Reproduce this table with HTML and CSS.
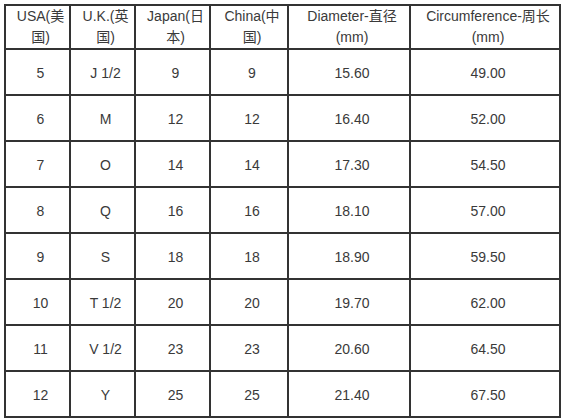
FILE: index.html
```html
<!DOCTYPE html>
<html>
<head>
<meta charset="utf-8">
<link rel="stylesheet" href="styles.css">
</head>
<body>
<table class="size-table">
  <colgroup>
    <col class="c1"><col class="c2"><col class="c3"><col class="c4"><col class="c5"><col class="c6">
  </colgroup>
  <thead>
    <tr>
      <th>USA(美<br>国)</th>
      <th>U.K.(英<br>国)</th>
      <th>Japan(日<br>本)</th>
      <th>China(中<br>国)</th>
      <th>Diameter-直径<br>(mm)</th>
      <th>Circumference-周长<br>(mm)</th>
    </tr>
  </thead>
  <tbody>
    <tr><td>5</td><td>J 1/2</td><td>9</td><td>9</td><td>15.60</td><td>49.00</td></tr>
    <tr><td>6</td><td>M</td><td>12</td><td>12</td><td>16.40</td><td>52.00</td></tr>
    <tr><td>7</td><td>O</td><td>14</td><td>14</td><td>17.30</td><td>54.50</td></tr>
    <tr><td>8</td><td>Q</td><td>16</td><td>16</td><td>18.10</td><td>57.00</td></tr>
    <tr><td>9</td><td>S</td><td>18</td><td>18</td><td>18.90</td><td>59.50</td></tr>
    <tr><td>10</td><td>T 1/2</td><td>20</td><td>20</td><td>19.70</td><td>62.00</td></tr>
    <tr><td>11</td><td>V 1/2</td><td>23</td><td>23</td><td>20.60</td><td>64.50</td></tr>
    <tr><td>12</td><td>Y</td><td>25</td><td>25</td><td>21.40</td><td>67.50</td></tr>
  </tbody>
</table>
</body>
</html>
```
FILE: styles.css
```css
html, body {
  margin: 0;
  padding: 0;
  background: #fff;
}
body {
  padding: 4px;
  font-family: "Liberation Sans", Arial, "Noto Sans CJK SC", sans-serif;
  font-size: 14px;
  color: #3a3a3a;
}
.size-table {
  border-collapse: collapse;
  table-layout: fixed;
  width: 555px;
}
.c1 { width: 65px; }
.c2 { width: 65px; }
.c3 { width: 75px; }
.c4 { width: 78px; }
.c5 { width: 122px; }
.c6 { width: 150px; }
.size-table th,
.size-table td {
  border: 2px solid #333;
  text-align: center;
  vertical-align: middle;
  font-weight: normal;
  line-height: 21px;
  white-space: nowrap;
}
.size-table th {
  padding: 0 0 0 6px;
  height: 42px;
}
.size-table td {
  padding: 2px 0 0 6px;
  height: 42px;
}
```
